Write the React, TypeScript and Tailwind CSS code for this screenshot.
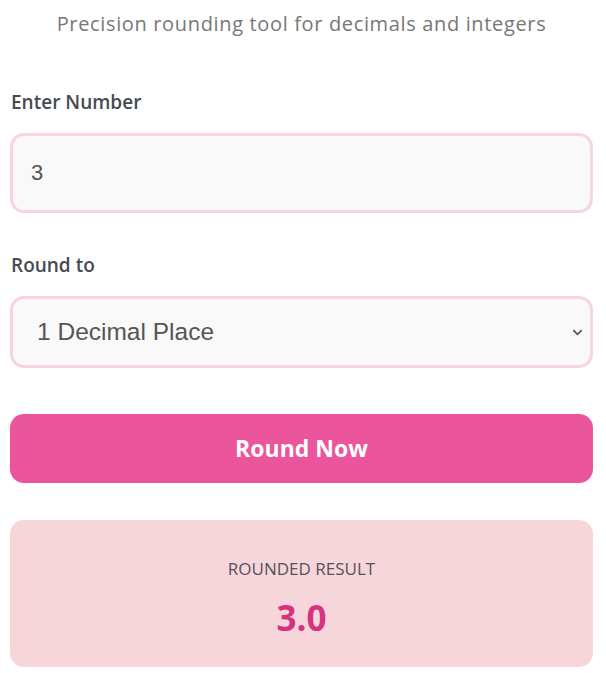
import React, { useState } from 'react'

const roundOptions = [
  { value: '0', label: 'Whole Number' },
  { value: '1', label: '1 Decimal Place' },
  { value: '2', label: '2 Decimal Places' },
  { value: '3', label: '3 Decimal Places' },
]

const App: React.FC = () => {
  const [num, setNum] = useState('3')
  const [places, setPlaces] = useState('1')
  const [result, setResult] = useState('3.0')

  const doRound = () => {
    const n = parseFloat(num)
    if (isNaN(n)) return
    setResult(n.toFixed(parseInt(places)))
  }

  return (
    <div className="min-h-screen bg-white pl-[10px] pr-[13px] font-['Open_Sans',sans-serif]">
      <p className="pt-[10px] text-center text-[20px] leading-[28px] tracking-[0.65px] text-[#777]">
        Precision rounding tool for decimals and integers
      </p>

      <label className="mt-[52px] block pl-[1px] text-[19px] leading-[24px] font-semibold text-[#444b52]">
        Enter Number
      </label>
      <input
        type="text"
        value={num}
        onChange={(e) => setNum(e.target.value)}
        className="mt-[19px] block h-[80px] w-full rounded-[14px] border-[3px] border-[#f6d6db] bg-[#f9f9f9] px-[18px] font-['Liberation_Sans',sans-serif] text-[22px] text-[#555] outline-none"
      />

      <label className="mt-[40px] block pl-[1px] text-[19px] leading-[24px] font-semibold text-[#444b52]">
        Round to
      </label>
      <div className="relative mt-[19px]">
        <select
          value={places}
          onChange={(e) => setPlaces(e.target.value)}
          className="block h-[72px] w-full appearance-none rounded-[14px] border-[3px] border-[#f6d6db] bg-[#f9f9f9] px-[24px] font-['Liberation_Sans',sans-serif] text-[24.5px] text-[#555] outline-none"
        >
          {roundOptions.map((o) => (
            <option key={o.value} value={o.value}>
              {o.label}
            </option>
          ))}
        </select>
        <svg
          className="pointer-events-none absolute right-[8px] top-1/2 h-[15px] w-[15px] -translate-y-1/2 text-[#555]"
          viewBox="0 0 16 16"
          fill="none"
          stroke="currentColor"
          strokeWidth={1.8}
        >
          <path d="M3.5 6l4.5 4.5 4.5-4.5" />
        </svg>
      </div>

      <button
        onClick={doRound}
        className="mt-[46px] block h-[69px] w-full rounded-[14px] bg-[#eb559c] text-[23px] font-bold text-white"
      >
        Round Now
      </button>

      <div className="mt-[37px] flex h-[147px] flex-col items-center justify-center rounded-[14px] bg-[#f7d6db] pt-[9px]">
        <div className="text-[17px] leading-[22px] text-[#55525a]">ROUNDED RESULT</div>
        <div className="mt-[18px] text-[35px] leading-[40px] font-bold text-[#d6327f]">{result}</div>
      </div>
    </div>
  )
}

export default App
